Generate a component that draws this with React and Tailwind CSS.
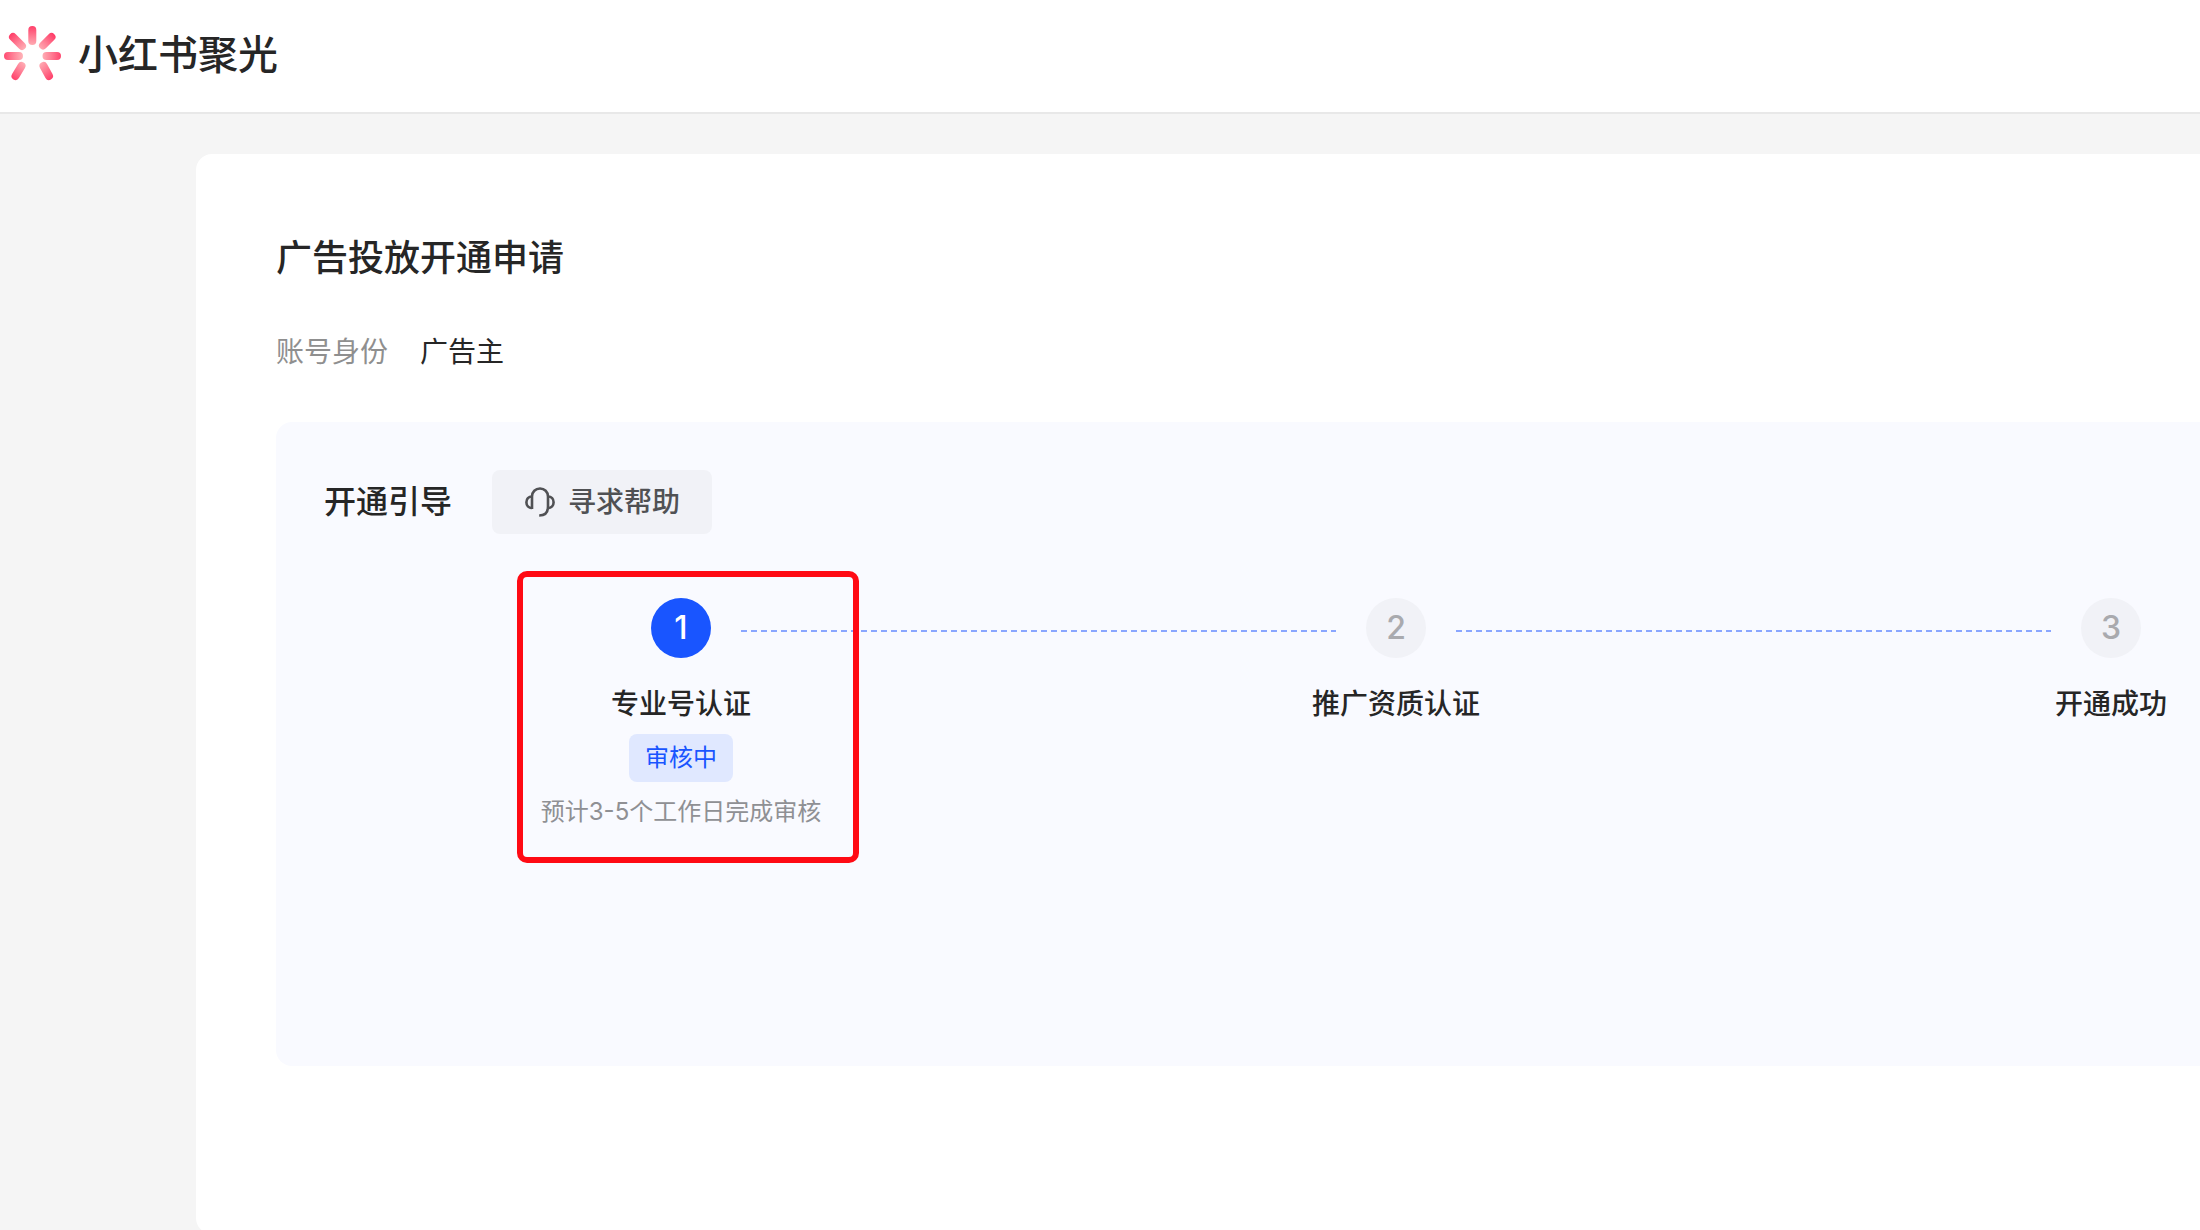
const steps = [
  {
    id: 1,
    label: '专业号认证',
    active: true,
    status: '审核中',
    note: '预计3-5个工作日完成审核',
  },
  { id: 2, label: '推广资质认证' },
  { id: 3, label: '开通成功' },
];

function Logo() {
  return (
    <svg className="h-16 w-16 shrink-0" viewBox="0 0 64 64" fill="none" aria-hidden="true">
      <defs>
        <radialGradient id="ray" gradientUnits="userSpaceOnUse" cx="32" cy="32" r="31">
          <stop offset="0.3" stopColor="#ffb4b9" />
          <stop offset="0.6" stopColor="#ff8297" />
          <stop offset="1" stopColor="#ff3a66" />
        </radialGradient>
      </defs>
      <g stroke="url(#ray)" strokeWidth="8" strokeLinecap="round">
        <path d="M32.3 6V17" />
        <path d="M13 13L22 22" />
        <path d="M51.5 13L43 21.5" />
        <path d="M8 32L19 32.01" />
        <path d="M46.5 32L57 32.01" />
        <path d="M15.5 52L21.5 42" />
        <path d="M49 52L43.5 42" />
      </g>
    </svg>
  );
}

function HeadsetIcon() {
  return (
    <svg
      className="h-8 w-8 shrink-0"
      viewBox="0 0 32 32"
      fill="none"
      stroke="currentColor"
      strokeWidth="2.6"
      aria-hidden="true"
    >
      <path d="M8 23V10.5C8 5.7 11.5 2.5 16 2.5S24 5.7 24 10.5V20.5C24 26.5 21 29.5 15.2 29.5" />
      <path d="M8 10.5C4.500 10.5 2.4 13 2.4 16.3S4.5 22 8 22" />
      <path d="M24 10.5C27.5 10.5 29.6 13 29.6 16.3S27.5 22 24 22" />
    </svg>
  );
}

function Step({ step }) {
  return (
    <li className="relative flex w-30 shrink-0 flex-col items-center whitespace-nowrap">
      <span
        className={
          step.active
            ? 'flex size-15 items-center justify-center rounded-full bg-[#1955ff] text-[32px] leading-10 font-medium text-white'
            : 'flex size-15 items-center justify-center rounded-full bg-[#f1f2f7] text-[32px] leading-10 font-medium text-[#a9aaae]'
        }
      >
        {step.id}
      </span>
      <span className="mt-6 text-[28px] leading-11 font-medium">{step.label}</span>
      {step.status && (
        <span className="mt-2 rounded-lg bg-[#e0e8ff] px-4 text-2xl leading-12 text-[#1955ff]">
          {step.status}
        </span>
      )}
      {step.note && <span className="mt-3 text-2xl leading-9 text-[#8f9094]">{step.note}</span>}
      {step.active && (
        <span className="pointer-events-none absolute -top-[27px] left-1/2 z-10 -ml-[164px] h-[292px] w-[342px] rounded-[10px] border-6 border-[#ff0a14]" />
      )}
    </li>
  );
}

function Connector() {
  return (
    <li
      aria-hidden="true"
      className="mt-8 h-0.5 flex-1 bg-[repeating-linear-gradient(90deg,#8aa6ff_0_6px,transparent_6px_10px)]"
    />
  );
}

export default function App() {
  return (
    <div className="flex h-screen flex-col overflow-hidden bg-[#f5f5f5] font-['Inter','Noto_Sans_CJK_SC',sans-serif] text-[#262626]">
      <header className="flex h-[114px] shrink-0 items-center gap-3.5 border-b-2 border-[#e8e8e8] bg-white">
        <Logo />
        <span className="pb-0.5 text-[40px] leading-15 font-medium">小红书聚光</span>
      </header>

      <main className="mt-10 -mb-1 ml-49 flex-1 rounded-l-2xl bg-white pt-20 pl-20">
        <h1 className="text-4xl leading-12 font-medium">广告投放开通申请</h1>
        <dl className="mt-12 flex gap-8 text-[28px] leading-11">
          <dt className="text-[#8f8f8f]">账号身份</dt>
          <dd>广告主</dd>
        </dl>

        <section className="mt-12 min-h-[644px] rounded-l-2xl bg-[#f9faff] pt-12">
          <div className="flex items-center gap-10 pl-12">
            <h2 className="text-[32px] leading-12 font-medium">开通引导</h2>
            <button
              type="button"
              className="flex h-16 items-center gap-3 rounded-lg bg-[#f1f2f7] px-8 text-[28px] font-medium text-[#505154]"
            >
              <HeadsetIcon />
              寻求帮助
            </button>
          </div>

          <ol className="mt-16 flex items-start pr-[29px] pl-[345px]">
            <Step step={steps[0]} />
            <Connector />
            <Step step={steps[1]} />
            <Connector />
            <Step step={steps[2]} />
          </ol>
        </section>
      </main>
    </div>
  );
}
